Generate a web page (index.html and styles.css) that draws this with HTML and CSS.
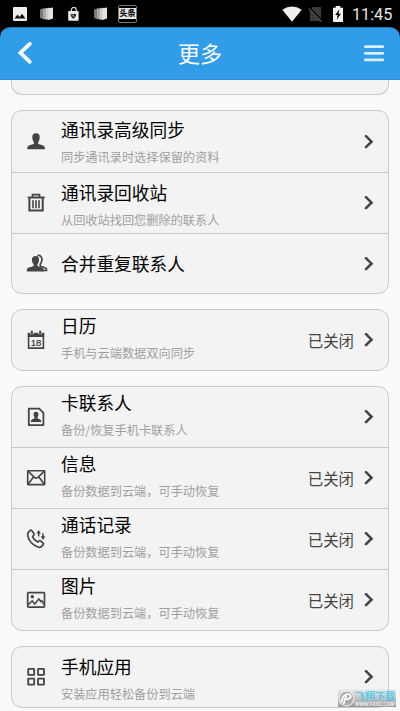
FILE: index.html
```html
<!DOCTYPE html>
<html lang="zh-CN">
<head>
<meta charset="utf-8">
<title>更多</title>
<link rel="stylesheet" href="styles.css">
</head>
<body>
<svg class="defs" width="0" height="0">
  <symbol id="chevron" viewBox="0 0 10 14"><path d="M2 1.2L7.5 6.7L2 12.2" fill="none" stroke="#444" stroke-width="2.6" stroke-linecap="round"/></symbol>
  <symbol id="stack" viewBox="0 0 14 14"><path d="M0 2.5L4 1V12.5L0 11z" fill="#777"/><path d="M3 2L7 .8V13L3 11.5z" fill="#aaa"/><path d="M6 1.8L9 .6V13L6 12z" fill="#ccc"/><path d="M8.5 1.3L13 .5V11.5L8.5 13z" fill="#e2e2e2"/></symbol>
</svg>
<div class="status">
  <div class="notices">
    <svg width="14" height="14" viewBox="0 0 14 14"><rect width="14" height="14" rx="1" fill="#eee"/><path d="M1.5 11.5L4.5 7.5L6.5 10L9 6.8L12.5 11.5z" fill="#111"/></svg>
    <svg width="14" height="14"><use href="#stack"/></svg>
    <svg width="14" height="14" viewBox="0 0 14 14"><path d="M4.4 4.5V2.8a2.4 2.4 0 0 1 4.8 0V4.5" fill="none" stroke="#ddd" stroke-width="1.2"/><rect x="1.2" y="4" width="10.4" height="9.7" rx=".6" fill="#eee"/><path d="M3.4 7.8Q4.7 6 6.4 7.5Q8 6 9.3 7.8Q9 10 6.4 11.9Q3.8 10 3.4 7.8z" fill="#222"/><path d="M4.5 8L7.5 9.7" stroke="#ddd" stroke-width=".8"/></svg>
    <svg width="14" height="14"><use href="#stack"/></svg>
    <span class="toutiao">头条</span>
  </div>
  <div class="system">
    <svg width="20" height="16" viewBox="0 0 20 16"><path d="M.3 3.8Q10-3 19.7 3.8L10 15.7z" fill="#eee"/></svg>
    <svg class="sim" width="15" height="16" viewBox="0 0 15 16"><path d="M5 1H13V15H2V4z" fill="#3a3a3a"/><path d="M.5 1.5L14 15" stroke="#000" stroke-width="2.4"/><path d="M.5 2.5L13.5 15.5" stroke="#555" stroke-width="1.1"/></svg>
    <svg class="battery" width="10" height="16" viewBox="0 0 10 16"><path d="M0 1.8H2.7V0H7.3V1.8H10V16H0z" fill="#f2f2f2"/><path d="M6.4 3.2L2.2 9.1H4.6L3.8 13.7L7.9 7.7H5.5z" fill="#000"/></svg>
    <span class="clock">11:45</span>
  </div>
</div>
<header class="bar">
  <svg class="back" width="15" height="22" viewBox="0 0 15 22"><path d="M12.8 1.9L3.4 10.7L12.8 19.8" fill="none" stroke="#fff" stroke-width="3.7" stroke-linecap="round"/></svg>
  <h1>更多</h1>
  <svg class="menu" width="20" height="17" viewBox="0 0 20 17"><path d="M1.3 1.7H18.7M1.3 8.3H18.7M1.3 14.9H18.7" stroke="#d9efff" stroke-width="2.8" stroke-linecap="round"/></svg>
</header>
<main>
  <section class="card clipped"></section>

  <section class="card">
    <div class="row mid">
      <svg class="icon" viewBox="0 0 20 20"><path d="M10 1.3C12.9 1.3 14 3.3 13.7 6C13.4 8.3 12.7 9.3 12.2 10.2V11.8C14 13 18.9 13 18.9 16V17.3H1.3V16C1.3 13 6.1 13 7.9 11.8V10.2C7.3 9.3 6.6 8.3 6.3 6C6.1 3.3 7.1 1.3 10 1.3z" fill="#444"/></svg>
      <div class="text"><h2>通讯录高级同步</h2><p>同步通讯录时选择保留的资料</p></div>
      <svg class="go"><use href="#chevron"/></svg>
    </div>
    <div class="row low">
      <svg class="icon" viewBox="0 0 20 20" fill="none" stroke="#444"><path d="M1.7 4.5H18.6" stroke-width="2"/><path d="M6.5 4.2V1.6H13.5V4.2" stroke-width="1.7"/><path d="M3.4 5.2V17.4H16.7V5.2" stroke-width="2"/><path d="M7 7.3V15.3M10 7.3V15.3M13 7.3V15.3" stroke-width="1.6"/></svg>
      <div class="text"><h2>通讯录回收站</h2><p>从回收站找回您删除的联系人</p></div>
      <svg class="go"><use href="#chevron"/></svg>
    </div>
    <div class="row short single">
      <svg class="icon" viewBox="0 0 20 20"><path d="M11.5 1.5C15 1 16.3 3.5 15.9 6.3Q15.4 9 14.2 10.3V12C16 13.2 20.5 13.4 20.5 15.5V16.5H16" fill="none" stroke="#444" stroke-width="1.7"/><path d="M9.7 1.9C12.4 1.9 13.3 4 13 6.3Q12.6 9 11.5 10.3V12C13 13 17.8 13.2 17.8 16V17.6H.8V16C.8 13.2 6 13 7.6 12V10.3Q6.2 9 5.9 6.3C5.7 4 7 1.9 9.7 1.9z" fill="#444"/></svg>
      <div class="text"><h2>合并重复联系人</h2></div>
      <svg class="go"><use href="#chevron"/></svg>
    </div>
  </section>

  <section class="card">
    <div class="row short high">
      <svg class="icon" viewBox="0 0 20 20"><path d="M2.6 4H17.4V18.1H2.6z" fill="none" stroke="#444" stroke-width="1.6"/><path d="M1.8 2.8H18.2V7H1.8z" fill="#444"/><path d="M5.8 1V4.3M14.2 1V4.3" stroke="#f3f3f3" stroke-width="3.6"/><path d="M5.8 .8V4.3M14.2 .8V4.3" stroke="#444" stroke-width="2"/><text x="10" y="15.9" text-anchor="middle" class="day">18</text></svg>
      <div class="text"><h2>日历</h2><p>手机与云端数据双向同步</p></div>
      <span class="state">已关闭</span>
      <svg class="go"><use href="#chevron"/></svg>
    </div>
  </section>

  <section class="card">
    <div class="row short high">
      <svg class="icon" viewBox="0 0 20 20"><path d="M2.8 1.7H13.2L17.4 5.8V18.1H2.8z" fill="none" stroke="#444" stroke-width="1.8" stroke-linejoin="round"/><path d="M10 4.7C12.2 4.7 12.7 6.5 12.4 8Q12.1 9.5 11.5 10.2V11.3C12.5 12 15.3 12 15.3 14.9H4.9C4.9 12 7.5 12 8.5 11.3V10.2Q7.9 9.5 7.6 8C7.4 6.5 7.8 4.7 10 4.7z" fill="#444"/></svg>
      <div class="text"><h2>卡联系人</h2><p>备份/恢复手机卡联系人</p></div>
      <svg class="go"><use href="#chevron"/></svg>
    </div>
    <div class="row high">
      <svg class="icon" viewBox="0 0 20 20" fill="none" stroke="#444" stroke-width="1.6"><rect x="1.7" y="2.7" width="17" height="13.9" rx=".5"/><path d="M2 3.2L8.5 9.3Q10.2 10.7 11.9 9.3L18.4 3.2M2 16.2L7.5 9M18.4 16.2L12.9 9"/></svg>
      <div class="text"><h2>信息</h2><p>备份数据到云端，可手动恢复</p></div>
      <span class="state">已关闭</span>
      <svg class="go"><use href="#chevron"/></svg>
    </div>
    <div class="row high">
      <svg class="icon" viewBox="0 0 20 20" fill="none" stroke="#444"><path d="M2.3 3.3L4.2 1.4Q5 .8 5.7 1.6L8 4.8Q8.4 5.7 7.7 6.4L6.5 7.6Q8 11.3 11.7 13.1L13 12Q13.8 11.4 14.6 11.9L17.2 14.1Q17.9 14.8 17.2 15.7L15.2 17.8Q13 19.3 8.5 16.3Q2.8 12.3 1.8 6.8Q1.4 4.6 2.3 3.3z" stroke-width="1.7" stroke-linejoin="round"/><path d="M12.7 7.5V2.5" stroke-width="1.5"/><path d="M10.5 4.6L12.7 1L14.9 4.6z" fill="#444" stroke="none"/><path d="M17 4.3V9" stroke-width="1.5"/><path d="M14.7 7.2L17 10.9L19.3 7.2z" fill="#444" stroke="none"/></svg>
      <div class="text"><h2>通话记录</h2><p>备份数据到云端，可手动恢复</p></div>
      <span class="state">已关闭</span>
      <svg class="go"><use href="#chevron"/></svg>
    </div>
    <div class="row high">
      <svg class="icon" viewBox="0 0 20 20" fill="none" stroke="#444" stroke-width="1.7"><rect x="1.7" y="2.7" width="16.8" height="14.4" rx=".8"/><path d="M2.3 14.6L6.2 10.8L8.7 14L12.8 9L15 11.6L16 10.8L18 14.3" stroke-width="1.5"/><circle cx="6.3" cy="6.7" r="1.7" fill="#444" stroke="none"/></svg>
      <div class="text"><h2>图片</h2><p>备份数据到云端，可手动恢复</p></div>
      <span class="state">已关闭</span>
      <svg class="go"><use href="#chevron"/></svg>
    </div>
  </section>

  <section class="card">
    <div class="row short low">
      <svg class="icon" viewBox="0 0 20 20" fill="none" stroke="#444" stroke-width="1.8"><rect x="2.2" y="1.9" width="6" height="6" rx=".5"/><rect x="12" y="1.9" width="6" height="6" rx=".5"/><rect x="2.2" y="11.7" width="6" height="6" rx=".5"/><rect x="12" y="11.7" width="6" height="6" rx=".5"/></svg>
      <div class="text"><h2>手机应用</h2><p>安装应用轻松备份到云端</p></div>
      <svg class="go"><use href="#chevron"/></svg>
    </div>
  </section>
</main>
<div class="watermark">
  <svg width="17" height="17" viewBox="0 0 17 17"><circle cx="8.5" cy="8.5" r="7.3" fill="#aaa" stroke="#e8e8e8" stroke-width="1.3"/><path d="M3.5 12.5Q4 6 8 4.5Q12 3.5 13 6.2Q12.5 9.3 7 9.5M8.6 5.5Q6 9 5.8 14" fill="none" stroke="#fff" stroke-width="1.7"/></svg>
  <div class="site"><b>飞翔下载</b><i>WWW.FXXZ.COM</i></div>
</div>
</body>
</html>
```
FILE: styles.css
```css
* { box-sizing: border-box; }

body {
  margin: 0;
  height: 711px;
  overflow: hidden;
  position: relative;
  background: #f9f9f9;
  color: #000;
  font-family: "Noto Sans CJK SC", sans-serif;
}

svg { display: block; flex: none; }
.defs { position: absolute; }
h1, h2, p { margin: 0; font-weight: 400; white-space: nowrap; }

.status {
  height: 27px;
  padding: 0 9px 0 13px;
  background: #000;
  display: flex;
  justify-content: space-between;
  align-items: center;
}
.notices { display: flex; align-items: center; gap: 13px; }
.toutiao {
  width: 19px;
  height: 18px;
  margin-left: -3px;
  border: 1px solid #777;
  border-radius: 2px;
  background: linear-gradient(#000 2px, #e6e6e6 2px, #e6e6e6 13px, #000 13px);
  color: #111;
  font-size: 8px;
  font-weight: 900;
  line-height: 14px;
  text-align: center;
  white-space: nowrap;
}
.system { display: flex; align-items: center; }
.sim { margin-left: 6px; }
.battery { margin-left: 10px; }
.clock {
  margin-left: 9px;
  width: 39px;
  color: #e6e6e6;
  font: 400 16.2px/27px Roboto, sans-serif;
  padding-top: 1px;
  white-space: nowrap;
}

.bar {
  height: 53px;
  padding: 0 16px 0 17px;
  display: flex;
  justify-content: space-between;
  align-items: center;
  background: #319ce8;
  border-top: 1px solid #2579b5;
  border-bottom: 1px solid #2b8fd8;
  border-radius: 10px 10px 0 0;
  box-shadow: 0 -10px 0 #000;
}
.back, .menu { margin-bottom: 1px; }
.bar h1 { color: #fff; font-size: 22px; line-height: 50px; margin: 0 0 3px 4px; }

main { padding: 0 11px; }
.card {
  margin-bottom: 15px;
  border: 1px solid #c9c9c9;
  border-radius: 11px;
  background: #f3f3f3;
}
.clipped { height: 15px; border-top: 0; border-radius: 0 0 11px 11px; }

.row {
  height: 61px;
  padding: 0 14px;
  display: flex;
  align-items: center;
}
.row + .row { border-top: 1px solid #c9c9c9; }
.row.short { height: 60px; }
.icon { width: 20px; height: 20px; margin-right: 15px; overflow: visible; }
.text { flex: 1; align-self: stretch; }
.text h2 { font-size: 17.7px; line-height: 26px; }
.text p { font-size: 12.2px; line-height: 18px; margin-top: 6px; color: #a0a0a0; }
.high .text { padding-top: 2px; }
.mid .text { padding-top: 5px; }
.low .text { padding-top: 6px; }
.single .text { padding-top: 16px; }
.state { margin-right: 10px; color: #444; font-size: 15.4px; line-height: 24px; }
.go { width: 10px; height: 14px; }
.day { font: 400 9.6px "Liberation Sans", sans-serif; fill: #333; stroke: #333; stroke-width: .2px; }

.watermark {
  position: absolute;
  left: 338px;
  top: 689px;
  width: 58px;
  height: 18px;
  display: flex;
  align-items: center;
  background: linear-gradient(rgba(200, 200, 200, .15), #b4b4b4 70%, #999);
}
.site { display: flex; flex-direction: column; width: 40px; }
.site b {
  color: #55cbe8;
  font-size: 10px;
  line-height: 12px;
  font-weight: 700;
  white-space: nowrap;
}
.site i {
  color: #eee;
  font: 700 4.8px/5px "Liberation Sans", sans-serif;
  white-space: nowrap;
}
```
